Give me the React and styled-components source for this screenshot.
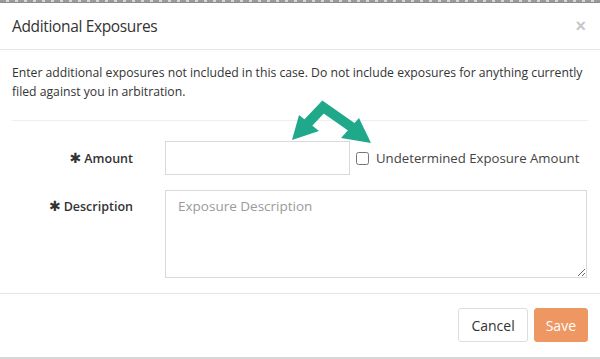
import React from 'react'
import styled, { createGlobalStyle } from 'styled-components'

const Global = createGlobalStyle`
  html, body { margin: 0; padding: 0; background: #fff; }
  body { width: 600px; height: 359px; overflow: hidden; font-family: "Open Sans", "Liberation Sans", sans-serif; color: #333; }
`

const Page = styled.div`
  position: relative;
  width: 600px;
  height: 359px;
  display: flex;
  flex-direction: column;
`

const Backdrop = styled.div`
  flex-shrink: 0;
  height: 2px;
  background: repeating-linear-gradient(90deg, #9a9a9a 0 6px, #d8d8d8 6px 9px);
  border-bottom: 1px solid #8c8c8c;
`

const Modal = styled.div`
  flex: 1;
  min-height: 0;
  display: flex;
  flex-direction: column;
  background: #fff;
  border-bottom: 2px solid #d6d6d6;
`

const Header = styled.div`
  flex-shrink: 0;
  height: 47px;
  box-sizing: border-box;
  padding: 0 12px;
  display: flex;
  align-items: center;
  justify-content: space-between;
  border-bottom: 1px solid #e7e7e7;
`

const Title = styled.h4`
  margin: 0;
  font-size: 15.5px;
  letter-spacing: -0.35px;
  font-weight: 400;
  color: #333;
`

const Close = styled.span`
  font-family: "Liberation Sans", sans-serif;
  font-size: 18px;
  font-weight: 700;
  color: #000;
  opacity: 0.22;
  line-height: 1;
  margin-right: 2px;
`

const Body = styled.div`
  padding: 13px 12px 0;
`

const Intro = styled.p`
  margin: 0;
  font-size: 12.2px;
  line-height: 19px;
  color: #333;
`

const Divider = styled.hr`
  margin: 19px 0 20px;
  border: 0;
  border-top: 1px solid #eee;
`

const Row = styled.div`
  display: flex;
  align-items: ${p => (p.top ? 'flex-start' : 'center')};
  margin-bottom: 15px;
  &:last-child { margin-bottom: 0; }
`

const Label = styled.label`
  width: 121px;
  margin-right: 32px;
  text-align: right;
  font-size: 12.5px;
  font-weight: 600;
  color: #333;
  padding-top: ${p => (p.top ? '8px' : '0')};
`

const Star = styled.span`
  font-family: "DejaVu Sans", sans-serif;
  font-size: 14px;
  font-weight: 700;
  margin-right: 3px;
`

const TextInput = styled.input`
  box-sizing: border-box;
  width: 185px;
  height: 34px;
  border: 1px solid #d9d9d9;
  border-radius: 0;
  outline: none;
  padding: 6px 12px;
  font-family: inherit;
  font-size: 14px;
`

const Check = styled.label`
  display: flex;
  align-items: center;
  margin-left: 6px;
  font-size: 13.2px;
  color: #444;
  & > input {
    margin: 0 7px 0 0;
    width: 13px;
    height: 13px;
  }
`

const TextArea = styled.textarea`
  box-sizing: border-box;
  width: 422px;
  height: 88px;
  border: 1px solid #d9d9d9;
  border-radius: 0;
  outline: none;
  padding: 6px 12px;
  font-family: inherit;
  font-size: 13.5px;
  color: #333;
  &::placeholder { color: #9a9a9a; }
`

const Footer = styled.div`
  margin-top: auto;
  display: flex;
  justify-content: flex-end;
  gap: 6px;
  padding: 14px 12px 15px;
  border-top: 1px solid #e7e7e7;
`

const Button = styled.button`
  height: 34px;
  padding: 0 ${p => (p.primary ? '11px' : '12px')};
  font-family: inherit;
  font-size: 14px;
  border-radius: 3px;
  border: 1px solid ${p => (p.primary ? '#ee9763' : '#ddd')};
  background: ${p => (p.primary ? '#ee9763' : '#fff')};
  color: ${p => (p.primary ? '#fff' : '#333')};
`

const Annotation = styled.svg`
  position: absolute;
  left: 0;
  top: 0;
  pointer-events: none;
`

export default function App() {
  return (
    <Page>
      <Global />
      <Backdrop />
      <Modal>
        <Header>
          <Title>Additional Exposures</Title>
          <Close>×</Close>
        </Header>
        <Body>
          <Intro>
            Enter additional exposures not included in this case. Do not include exposures for anything currently
            filed against you in arbitration.
          </Intro>
          <Divider />
          <Row>
            <Label><Star>✱</Star>Amount</Label>
            <TextInput type="text" />
            <Check>
              <input type="checkbox" />
              Undetermined Exposure Amount
            </Check>
          </Row>
          <Row top>
            <Label top><Star>✱</Star>Description</Label>
            <TextArea placeholder="Exposure Description" />
          </Row>
        </Body>
        <Footer>
          <Button>Cancel</Button>
          <Button primary>Save</Button>
        </Footer>
      </Modal>
      <Annotation width="600" height="359" viewBox="0 0 600 359">
        <polyline points="306,125 323,107 353,128" fill="none" stroke="#1fa98a" strokeWidth="10" strokeLinejoin="miter" />
        <polygon points="292,140 299,115 319,131" fill="#1fa98a" />
        <polygon points="371,143 359,118 341,138" fill="#1fa98a" />
      </Annotation>
    </Page>
  )
}
